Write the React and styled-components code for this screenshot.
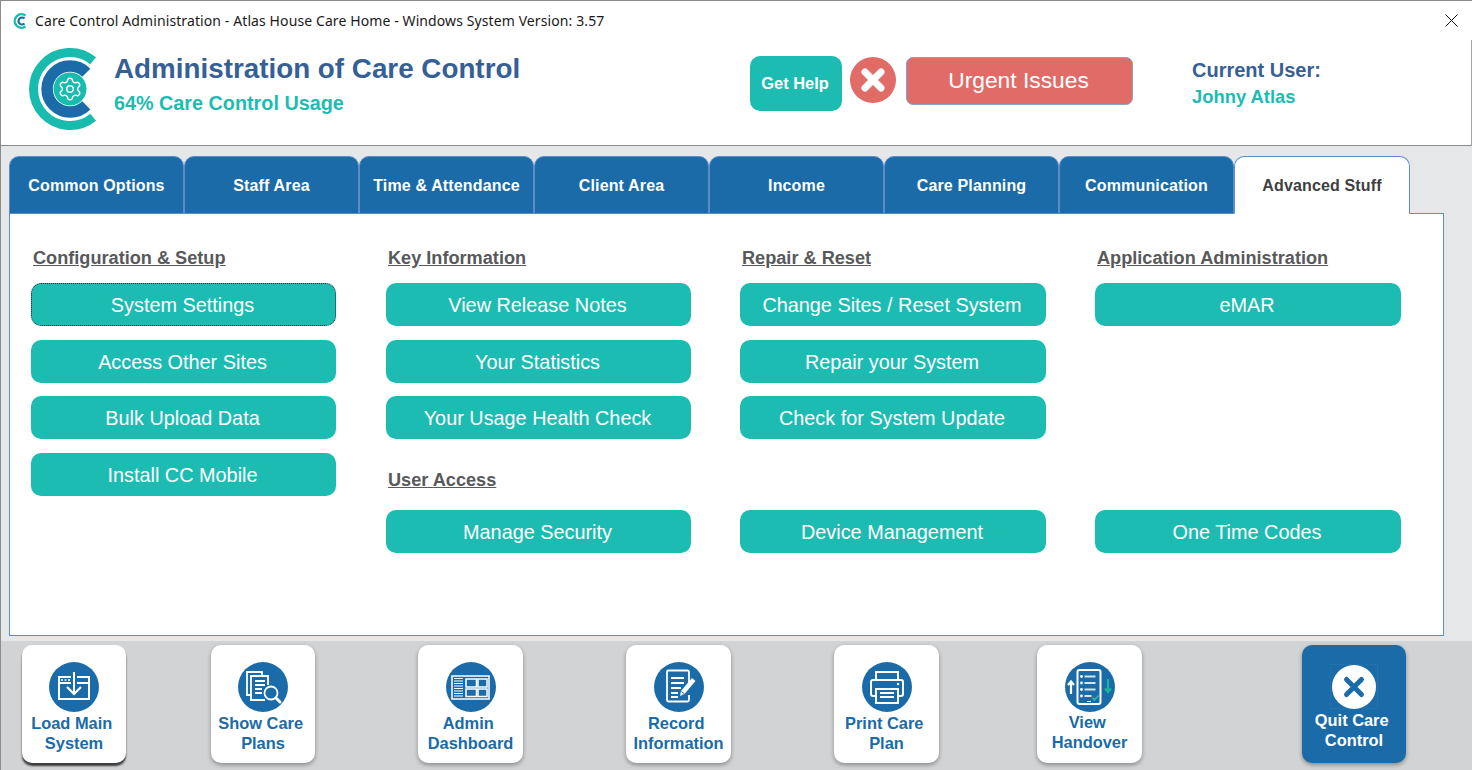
import React from "react";
import styled, { createGlobalStyle } from "styled-components";
import { Settings } from "lucide-react";

const BLUE = "#1a6ba8";
const TEAL = "#1dbcb2";
const NAVY = "#365f96";

const GlobalStyle = createGlobalStyle`
  html, body {
    margin: 0;
    padding: 0;
    height: 100%;
    overflow: hidden;
    font-family: "Liberation Sans", Arial, sans-serif;
  }
  * { box-sizing: border-box; }
`;

const LogoMark = ({ className }) => (
  <svg className={className} viewBox="0 0 85 92" fill="none">
    <path d="M73.2 16.8A36.500 36.500 0 1 0 73.2 73.2" stroke="#19bbae" strokeWidth="9" />
    <path d="M66.3 28.7A23 23 0 1 0 66.3 61.3" stroke={BLUE} strokeWidth="11.5" />
    <circle cx="50" cy="45" r="16.5" fill="#19bbae" />
    <Settings x="37" y="32" width="26" height="26" color="#fff" strokeWidth="1.3" />
  </svg>
);

const SmallLogo = ({ className }) => (
  <svg className={className} viewBox="0 0 14 16" fill="none">
    <path d="M12.500 2.500A6.800 6.800 0 1 0 12.500 13.500" stroke="#19bbae" strokeWidth="2.400" />
    <path d="M11.500 5.500A3.500 3.500 0 1 0 11.500 10.500" stroke={BLUE} strokeWidth="2.200" />
  </svg>
);

const LoadIcon = () => (
  <IconSvg viewBox="0 0 50 50">
    <circle cx="25" cy="25" r="25" fill={BLUE} />
    <g fill="none" stroke="#fff" strokeWidth="2">
      <path d="M22 15H10v22h30V15H28" />
      <path d="M10 21h12M28 21h12" />
      <path d="M25 10v22" />
      <path d="M18 25l7 7 7-7" strokeWidth="2.200" />
    </g>
    <path d="M12 18h2M15.500 18h2M19 18h2" stroke="#fff" strokeWidth="1.5" />
  </IconSvg>
);

const PlansIcon = () => (
  <IconSvg viewBox="0 0 50 50">
    <circle cx="25" cy="25" r="25" fill={BLUE} />
    <g fill="none" stroke="#fff" strokeWidth="1.800">
      <path d="M13 33H9V10h15v4" />
      <path d="M30 23V14H13v24h14" />
      <path d="M17 19h10M17 23h10M17 27h7M17 31h7" />
      <circle cx="33" cy="31" r="6.500" strokeWidth="1.800" />
    </g>
    <path d="M38 36l4 4" stroke="#fff" strokeWidth="3" strokeLinecap="round" />
  </IconSvg>
);

const DashIcon = () => (
  <IconSvg viewBox="0 0 50 50">
    <circle cx="25" cy="25" r="25" fill={BLUE} />
    <rect x="6" y="14" width="37" height="23" fill="none" stroke="#fff" strokeWidth="1.500" />
    <path
      d="M8 16.500h9M8 19h9M8 21.500h9M8 24h9M8 26.500h9M8 29h9M8 31.500h9M8 34h9"
      stroke="#fff"
      strokeWidth="1"
    />
    <g fill="none" stroke="#fff" strokeWidth="1.500">
      <rect x="20" y="17" width="10.500" height="8" />
      <rect x="32" y="17" width="9" height="8" />
      <rect x="20" y="27" width="10.500" height="7.500" />
      <rect x="32" y="27" width="9" height="7.500" />
    </g>
  </IconSvg>
);

const RecordIcon = () => (
  <IconSvg viewBox="0 0 50 50">
    <circle cx="25" cy="25" r="25" fill={BLUE} />
    <g fill="none" stroke="#fff" strokeWidth="1.800">
      <path d="M35 21V10a1.500 1.500 0 0 0-1.500-1.500h-19A1.500 1.500 0 0 0 13 10v28a1.500 1.500 0 0 0 1.500 1.500h19A1.500 1.500 0 0 0 35 38v-5" />
      <path d="M17 16h13M17 21h13M17 26h10M17 31h7M17 35h7" />
    </g>
    <path d="M26 34l1-5 11-13 3.500 3-11 13z" fill="#fff" />
    <path d="M27.500 29.500l3 2.500" stroke={BLUE} strokeWidth="1" />
  </IconSvg>
);

const PrintIcon = () => (
  <IconSvg viewBox="0 0 50 50">
    <circle cx="25" cy="25" r="25" fill={BLUE} />
    <g fill="none" stroke="#fff" strokeWidth="2">
      <path d="M14 18V10h22v8" />
      <path d="M14 34H11a2 2 0 0 1-2-2V20a2 2 0 0 1 2-2h28a2 2 0 0 1 2 2v12a2 2 0 0 1-2 2h-3" />
      <rect x="14" y="27" width="22" height="14" />
      <path d="M18 31h14M18 35h14" />
    </g>
    <circle cx="36" cy="22" r="1.200" fill="#fff" />
  </IconSvg>
);

const HandoverIcon = () => (
  <IconSvg viewBox="0 0 50 50">
    <circle cx="25" cy="25" r="25" fill={BLUE} />
    <rect x="12.500" y="8" width="23" height="34" rx="2" fill="none" stroke="#fff" strokeWidth="2" />
    <path d="M19.500 14.500h11M19.500 21h11M19.500 27.500h11M19.500 34h7" stroke="#d5e4ef" strokeWidth="1.800" />
    <g fill="#fff">
      <circle cx="16.500" cy="14.500" r="1.400" />
      <circle cx="16.500" cy="21" r="1.400" />
      <circle cx="16.500" cy="27.500" r="1.400" />
      <circle cx="16.500" cy="34" r="1.400" />
    </g>
    <path d="M22 39.500h4" stroke="#fff" strokeWidth="1" />
    <path d="M27.500 36l2 2 4-4.500" fill="none" stroke={TEAL} strokeWidth="1.800" />
    <path d="M6 32V19.500M3 23l3-3.500L9 23" fill="none" stroke="#fff" strokeWidth="2.200" />
    <path d="M43 17v13M40 26.500l3 3.500 3-3.500" fill="none" stroke="#19b494" strokeWidth="2.200" />
  </IconSvg>
);

const QuitIcon = () => (
  <QuitFrame>
    <svg width="44" height="44" viewBox="0 0 44 44">
      <circle cx="22" cy="22" r="22" fill="#fff" />
      <path d="M14.500 14.500l15 15M29.500 14.500l-15 15" stroke={BLUE} strokeWidth="5" strokeLinecap="round" />
    </svg>
  </QuitFrame>
);

const tabs = [
  "Common Options",
  "Staff Area",
  "Time & Attendance",
  "Client Area",
  "Income",
  "Care Planning",
  "Communication",
  "Advanced Stuff",
];

const dock = [
  { lines: ["Load Main\u00a0", "System"], icon: <LoadIcon />, gap: 21, raised: true },
  { lines: ["Show Care\u00a0", "Plans"], icon: <PlansIcon />, gap: 85 },
  { lines: ["Admin\u00a0", "Dashboard"], icon: <DashIcon />, gap: 103, wide: true },
  { lines: ["Record\u00a0", "Information"], icon: <RecordIcon />, gap: 103, wide: true },
  { lines: ["Print Care\u00a0", "Plan"], icon: <PrintIcon />, gap: 103, wide: true },
  { lines: ["View\u00a0", "Handover"], icon: <HandoverIcon />, gap: 98, wide: true, lift: true },
];

function App() {
  return (
    <Page>
      <GlobalStyle />
      <TitleBar>
        <TitleLogo />
        <TitleText>Care Control Administration - Atlas House Care Home - Windows System Version: 3.57</TitleText>
        <CloseGlyph viewBox="0 0 13 13">
          <path d="M.5.500l12 12M12.500.500l-12 12" stroke="#111" strokeWidth="1" fill="none" />
        </CloseGlyph>
      </TitleBar>

      <Header>
        <BigLogo />
        <Heading>
          <h1>Administration of Care Control</h1>
          <p>64% Care Control Usage</p>
        </Heading>
        <HelpButton>Get Help</HelpButton>
        <AlertDot>
          <svg width="46" height="46" viewBox="0 0 46 46">
            <circle cx="23" cy="23" r="23" fill="#e16b67" />
            <path d="M15 15l16 16M31 15L15 31" stroke="#fff" strokeWidth="7" strokeLinecap="round" />
          </svg>
        </AlertDot>
        <UrgentButton>Urgent Issues</UrgentButton>
        <UserBlock>
          <strong>Current User:</strong>
          <span>Johny Atlas</span>
        </UserBlock>
      </Header>

      <Body>
        <TabRow>
          {tabs.map((t, i) => (
            <Tab key={t} $active={i === tabs.length - 1}>
              {t}
            </Tab>
          ))}
        </TabRow>
        <Panel>
          <Column $w={305}>
            <GroupTitle>Configuration &amp; Setup</GroupTitle>
            <ActionButton $focused>System Settings</ActionButton>
            <ActionButton>Access Other Sites</ActionButton>
            <ActionButton>Bulk Upload Data</ActionButton>
            <ActionButton>Install CC Mobile</ActionButton>
          </Column>
          <Column $w={305}>
            <GroupTitle>Key Information</GroupTitle>
            <ActionButton>View Release Notes</ActionButton>
            <ActionButton>Your Statistics</ActionButton>
            <ActionButton>Your Usage Health Check</ActionButton>
            <GroupTitle $lower>User Access</GroupTitle>
            <ActionButton>Manage Security</ActionButton>
          </Column>
          <Column $w={306}>
            <GroupTitle>Repair &amp; Reset</GroupTitle>
            <ActionButton>Change Sites / Reset System</ActionButton>
            <ActionButton>Repair your System</ActionButton>
            <ActionButton>Check for System Update</ActionButton>
            <ActionButton $pushed>Device Management</ActionButton>
          </Column>
          <Column $w={306}>
            <GroupTitle>Application Administration</GroupTitle>
            <ActionButton>eMAR</ActionButton>
            <ActionButton $pushed>One Time Codes</ActionButton>
          </Column>
        </Panel>
      </Body>

      <Dock>
        {dock.map((d) => (
          <DockCard key={d.lines[0]} $gap={d.gap} $raised={d.raised} $wide={d.wide}>
            {d.icon}
            <DockLabel $lift={d.lift}>
              {d.lines[0]}
              <br />
              {d.lines[1]}
            </DockLabel>
          </DockCard>
        ))}
        <QuitCard>
          <QuitIcon />
          <DockLabel $light>
            Quit Care{"\u00a0"}
            <br />
            Control
          </DockLabel>
        </QuitCard>
      </Dock>
    </Page>
  );
}

const Page = styled.div`
  height: 100vh;
  display: flex;
  flex-direction: column;
  border-top: 1px solid #8c8c8c;
  border-left: 1px solid #8c8c8c;
  background: #e6e7e8;
`;

const TitleBar = styled.div`
  height: 39px;
  flex: none;
  display: flex;
  align-items: center;
  padding: 0 14px 0 12px;
  background: #fff;
`;

const TitleLogo = styled(SmallLogo)`
  width: 14px;
  height: 16px;
  margin-right: 8px;
`;

const TitleText = styled.span`
  font-family: "Noto Sans", sans-serif;
  font-size: 14px;
  letter-spacing: 0.1px;
  color: #1a1a1a;
`;

const CloseGlyph = styled.svg`
  width: 13px;
  height: 13px;
  margin-left: auto;
  flex: none;
`;

const Header = styled.div`
  height: 106px;
  flex: none;
  display: flex;
  align-items: flex-start;
  background: #fff;
  border-right: 1px solid #a6a6a6;
  border-bottom: 1px solid #8c8c8c;
`;

const BigLogo = styled(LogoMark)`
  width: 85px;
  height: 92px;
  margin: 4px 9px 0 19px;
  flex: none;
`;

const Heading = styled.div`
  width: 636px;
  flex: none;
  padding-top: 12px;

  h1 {
    margin: 0;
    font-size: 27.8px;
    line-height: 34px;
    font-weight: 700;
    color: ${NAVY};
  }
  p {
    margin: 5px 0 0;
    font-size: 19.8px;
    line-height: 24px;
    font-weight: 700;
    color: ${TEAL};
  }
`;

const HelpButton = styled.button`
  width: 92px;
  height: 55px;
  margin-top: 16px;
  padding: 0 2px 0 0;
  flex: none;
  border: 0;
  border-radius: 10px;
  background: ${TEAL};
  color: #fff;
  font: 700 16.4px "Liberation Sans", Arial, sans-serif;
`;

const AlertDot = styled.div`
  width: 46px;
  height: 46px;
  margin: 17px 10px 0 8px;
  flex: none;

  svg {
    display: block;
  }
`;

const UrgentButton = styled.button`
  width: 227px;
  height: 48px;
  margin-top: 17px;
  padding: 0 2px 2px 0;
  flex: none;
  border: 1px solid #7ea6cf;
  border-radius: 7px;
  background: #e16b67;
  color: #fff;
  font: 400 22.8px "Liberation Sans", Arial, sans-serif;
`;

const UserBlock = styled.div`
  margin: 20px 0 0 59px;
  display: flex;
  flex-direction: column;
  gap: 5px;
  line-height: 21px;
  font-weight: 700;

  strong {
    font-size: 20px;
    color: ${NAVY};
  }
  span {
    font-size: 18.4px;
    color: ${TEAL};
  }
`;

const Body = styled.div`
  flex: 1;
  min-height: 0;
  padding: 10px 28px 5px 8px;
  display: flex;
  flex-direction: column;
`;

const TabRow = styled.div`
  height: 58px;
  flex: none;
  display: flex;
  position: relative;
  z-index: 1;
  margin-bottom: -1px;
`;

const Tab = styled.div`
  width: ${(p) => (p.$active ? "176px" : "175px")};
  display: flex;
  align-items: center;
  justify-content: center;
  padding-top: 1px;
  border: 1px solid #5b8dc9;
  border-bottom: ${(p) => (p.$active ? "1px solid #fff" : "1px solid #5b8dc9")};
  border-radius: 10px 10px 0 0;
  font-size: 16px;
  letter-spacing: 0.15px;
  font-weight: 700;
  background: ${(p) => (p.$active ? "#fff" : BLUE)};
  color: ${(p) => (p.$active ? "#404040" : "#fff")};
`;

const Panel = styled.div`
  flex: 1;
  min-height: 0;
  display: grid;
  grid-template-columns: 355px 354px 355px 306px;
  align-content: start;
  padding: 34px 0 0 21px;
  background: #fff;
  border: 1px solid #5b8dc9;
`;

const Column = styled.div`
  width: ${(p) => p.$w}px;
  height: 305px;
  display: flex;
  flex-direction: column;
  gap: 13.67px;
`;

const GroupTitle = styled.h3`
  margin: ${(p) => (p.$lower ? "17.33px 0 5.33px 2px" : "0 0 0.33px 2px")};
  font-size: 18.15px;
  line-height: 21px;
  font-weight: 700;
  color: #58595b;
  text-decoration: underline;
`;

const ActionButton = styled.button`
  width: 100%;
  height: 43px;
  flex: none;
  padding: 2px 2px 0 0;
  margin-top: ${(p) => (p.$pushed ? "auto" : "0")};
  border: ${(p) => (p.$focused ? "1px dotted #222" : "0")};
  border-radius: 10px;
  background: ${TEAL};
  color: #fff;
  font: 400 19.85px "Liberation Sans", Arial, sans-serif;
`;

const Dock = styled.div`
  height: 129px;
  flex: none;
  display: flex;
  align-items: flex-start;
  padding-top: 4px;
  background: #d1d3d4;
`;

const DockCard = styled.div`
  width: ${(p) => (p.$wide ? "105px" : "104px")};
  height: 118px;
  flex: none;
  margin-left: ${(p) => p.$gap}px;
  padding-top: 17px;
  display: flex;
  flex-direction: column;
  align-items: center;
  background: #fff;
  border-radius: 10px;
  box-shadow: ${(p) =>
    p.$raised ? "0 3px 2px #3c3c3c" : "0 2px 4px rgba(0, 0, 0, 0.35)"};
`;

const QuitCard = styled(DockCard)`
  margin-left: 160px;
  padding-top: 19px;
  background: ${BLUE};
  width: 104px;
`;

const IconSvg = styled.svg`
  width: 50px;
  height: 50px;
  flex: none;
  display: block;
`;

const QuitFrame = styled.div`
  width: 48px;
  height: 45px;
  flex: none;
  display: flex;
  align-items: center;
  justify-content: center;
  border: 1px dotted #2a78b2;
`;

const DockLabel = styled.div`
  margin-top: ${(p) => (p.$lift ? "0" : "1px")};
  text-align: center;
  font-size: 16.4px;
  line-height: 20px;
  font-weight: 700;
  white-space: nowrap;
  color: ${(p) => (p.$light ? "#fff" : BLUE)};
`;

export default App;
